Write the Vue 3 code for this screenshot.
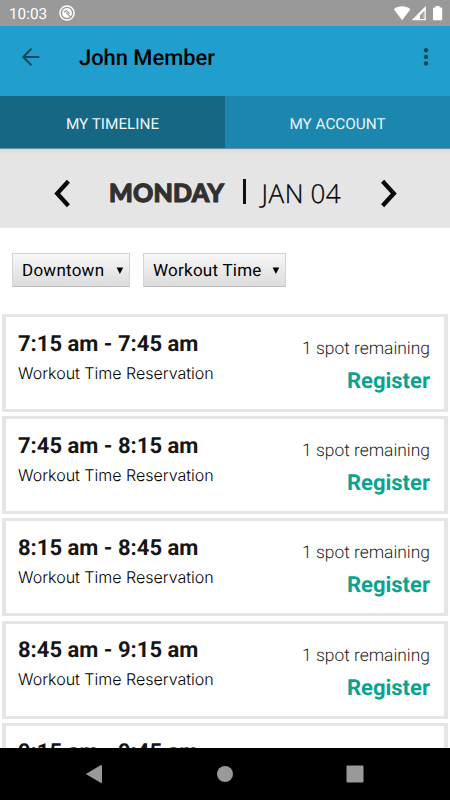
<script setup>
const slots = [
  '7:15 am - 7:45 am',
  '7:45 am - 8:15 am',
  '8:15 am - 8:45 am',
  '8:45 am - 9:15 am',
  '9:15 am - 9:45 am',
]
</script>

<template>
  <div class="screen">
    <div class="status">
      <span class="clock">10:03</span>
      <svg class="dnd" width="16" height="16" viewBox="0 0 16 16">
        <circle cx="8" cy="8" r="7.1" fill="none" stroke="#fff" stroke-width="1.5" />
        <circle cx="8" cy="8" r="4.9" fill="#fff" />
        <path d="M5 7.4q1.2-2 3.4-1.2l2 2.6M7.2 7.6l5.2 5" fill="none" stroke="#999" stroke-width="1.2" />
      </svg>
      <svg class="signals" width="50" height="16" viewBox="0 0 50 16">
        <path d="M0.8 3.2C5.6-.6 12.6-.6 17.4 3.2L9.1 14.2Z" fill="#fff" />
        <path fill-rule="evenodd" d="M32.8 0V14.2H18.6ZM31.5 4.8L27 9.2V12.9H31.5Z" fill="#fff" />
        <path d="M29 8.6L31 6.6V12.6H29Z" fill="#fff" opacity=".25" />
        <path d="M42.6 0h4v1.5h1.6q1 0 1 1V13.2q0 1-1 1h-7.2q-1 0-1-1V2.5q0-1 1-1h1.6Z" fill="#fff" />
      </svg>
    </div>

    <header class="appbar">
      <svg class="back" width="20" height="20" viewBox="0 0 20 20">
        <path d="M10.4 1.8L2.2 10L10.4 18.2M2.2 10H18.3" fill="none" stroke="#11475b" stroke-width="2" />
      </svg>
      <h1>John Member</h1>
      <svg class="more" width="6" height="20" viewBox="0 0 6 20">
        <circle cx="3" cy="3.3" r="2.2" /><circle cx="3" cy="9.9" r="2.2" /><circle cx="3" cy="16.5" r="2.2" />
      </svg>
    </header>

    <nav class="tabs">
      <div class="tab active"><span>MY TIMELINE</span></div>
      <div class="tab"><span>MY ACCOUNT</span></div>
    </nav>

    <section class="datebar">
      <svg class="prev" width="18" height="30" viewBox="0 0 18 30">
        <path d="M15.4 3.3L4.2 15.5L15.4 27.7" />
      </svg>
      <span class="day">MONDAY</span>
      <i class="rule"></i>
      <span class="date">JAN 04</span>
      <svg class="next" width="18" height="30" viewBox="0 0 18 30">
        <path d="M2.6 3.3L13.8 15.5L2.6 27.7" />
      </svg>
    </section>

    <section class="filters">
      <div class="select"><span>Downtown</span><svg width="8" height="8" viewBox="0 0 8 8"><path d="M.6.6H7.2L3.9 7Z" /></svg></div>
      <div class="select wide"><span>Workout Time</span><svg width="8" height="8" viewBox="0 0 8 8"><path d="M.6.6H7.2L3.9 7Z" /></svg></div>
    </section>

    <main class="list">
      <article v-for="time in slots" :key="time" class="card">
        <div class="info">
          <h2>{{ time }}</h2>
          <p>Workout Time Reservation</p>
        </div>
        <div class="action">
          <span class="spots">1 spot remaining</span>
          <b>Register</b>
        </div>
      </article>
    </main>

    <footer class="navbar">
      <svg width="18" height="20" viewBox="0 0 18 20"><path d="M.8 10L16 .9q1 0 1 1V18q0 1-1 1Z" /></svg>
      <svg width="18" height="18" viewBox="0 0 18 18"><circle cx="9" cy="9" r="8" /></svg>
      <svg width="18" height="18" viewBox="0 0 18 18"><rect x=".5" y=".5" width="17" height="17" rx="1" /></svg>
    </footer>
  </div>
</template>

<style>
body {
  margin: 0;
  overflow: hidden;
}
</style>

<style scoped>
.screen {
  width: 450px;
  height: 800px;
  display: flex;
  flex-direction: column;
  overflow: hidden;
  background: #fff;
  font-family: Roboto, sans-serif;
  color: #000;
  text-rendering: geometricPrecision;
}
.screen > * {
  flex: none;
  box-sizing: border-box;
}
svg {
  display: block;
  flex: none;
}
span, h1, h2, p, b {
  white-space: nowrap;
}
.status {
  height: 26px;
  display: flex;
  align-items: center;
  padding-left: 9px;
  padding-right: 7px;
  background: #999;
  color: #fff;
}
.clock {
  width: 50px;
  font-size: 15.3px;
  line-height: 26px;
  padding-top: 2px;
}
.signals {
  margin-left: auto;
  margin-top: 2px;
}
.appbar {
  height: 70px;
  display: flex;
  align-items: center;
  padding: 0 21px 8px 21px;
  background: #209fce;
}
h1 {
  margin: 3px auto 0 38px;
  font-size: 21.9px;
  line-height: 30px;
  font-weight: 500;
}
.more {
  fill: #11475b;
}
.tabs {
  height: 53px;
  display: flex;
  border-bottom: 1px solid #66929f;
}
.tab {
  flex: 1;
  display: flex;
  align-items: center;
  justify-content: center;
  background: #1b86ae;
  color: #eef6f9;
  font-size: 15.3px;
  padding-top: 3px;
}
.tab.active {
  background: #166784;
}
.datebar {
  height: 79px;
  display: flex;
  align-items: center;
  padding: 9px 0 0 53px;
  background: linear-gradient(#d9d9d9, #e5e5e5 5px);
}
.datebar path {
  fill: none;
  stroke: #080808;
  stroke-width: 4.3;
}
.day {
  width: 134px;
  margin-left: 38px;
  font: 900 25px/30px Lato, sans-serif;
  letter-spacing: .2px;
  color: #303030;
  -webkit-text-stroke: 1.1px #303030;
}
.rule {
  width: 2.5px;
  height: 25px;
  margin-bottom: 4px;
  background: #111;
}
.date {
  width: 118px;
  margin-left: 16px;
  font: 300 26px/30px "Open Sans", sans-serif;
  letter-spacing: .6px;
  word-spacing: -1px;
  -webkit-text-stroke: .3px #000;
}
.filters {
  height: 86px;
  display: flex;
  gap: 13px;
  padding: 25px 12px 0;
}
.select {
  box-sizing: border-box;
  width: 118px;
  height: 34px;
  display: flex;
  align-items: center;
  justify-content: space-between;
  padding: 1px 5px 0 9px;
  border: 1px solid #d4d4d4;
  border-bottom-color: #bcbcbc;
  border-radius: 1px;
  background: linear-gradient(#f7f7f7, #dcdcdc);
  font-size: 17px;
  letter-spacing: .25px;
}
.select.wide {
  width: 143px;
}
.list {
  height: 434px;
  display: flex;
  flex-direction: column;
  gap: 4.2px;
  padding: 0 2px;
  overflow: hidden;
}
.card {
  box-sizing: border-box;
  flex: none;
  height: 98px;
  display: flex;
  justify-content: space-between;
  border: 4px solid #e5e5e5;
  border-width: 3.5px 4px;
  padding: 0 14px 0 12px;
}
h2 {
  margin: 12.5px 0 0;
  font-size: 22px;
  line-height: 30px;
  font-weight: 700;
  color: #151515;
}
p {
  margin: 1px 0 0;
  font: 300 16px/24px Inter, sans-serif;
}
.action {
  display: flex;
  flex-direction: column;
  align-items: flex-end;
}
.spots {
  margin-top: 20px;
  font-size: 17.4px;
  line-height: 24px;
  font-weight: 300;
  color: #222;
}
b {
  margin-top: 7px;
  font-size: 22px;
  line-height: 28px;
  font-weight: 700;
  color: #08a391;
}
.navbar {
  height: 52px;
  display: flex;
  align-items: center;
  justify-content: space-between;
  padding: 0 86px 0 85px;
  background: #000;
  fill: #999;
}
</style>
